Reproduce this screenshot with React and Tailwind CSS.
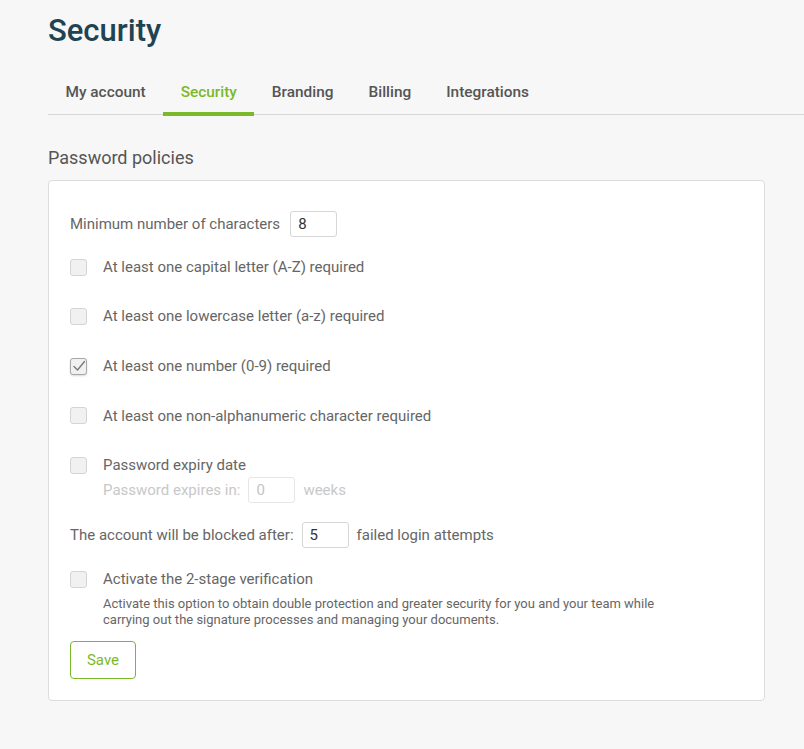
import React, { useState } from 'react';

const tabs = ['My account', 'Security', 'Branding', 'Billing', 'Integrations'];

const Checkbox = ({ checked, onChange }) => (
  <button
    type="button"
    onClick={onChange}
    className={`w-[17px] h-[17px] shrink-0 rounded-[3px] border bg-[#f1f1f1] flex items-center justify-center ${
      checked ? 'border-[#a8a8a8] shadow-[0_1px_2px_rgba(0,0,0,0.15)]' : 'border-[#d4d4d4]'
    }`}
  >
    {checked && (
      <svg width="14" height="14" viewBox="0 0 14 14" fill="none">
        <path d="M2 7.5 L5.5 11 L12.5 2.5" stroke="#7a7a7a" strokeWidth="1.4" strokeLinecap="round" strokeLinejoin="round" />
      </svg>
    )}
  </button>
);

const SmallInput = ({ value, disabled }) => (
  <input
    defaultValue={value}
    disabled={disabled}
    className={`w-[47px] h-[26px] border rounded-[3px] px-[7px] text-[15px] bg-white outline-none ${
      disabled ? 'border-[#e6e6e6] text-[#c4c4c4]' : 'border-[#d6d6d6] text-[#333]'
    }`}
  />
);

const CheckRow = ({ label, checked, onChange }) => (
  <div className="flex items-center gap-[16px] h-[22px]">
    <Checkbox checked={checked} onChange={onChange} />
    <span className="text-[15px] text-[#666]">{label}</span>
  </div>
);

export default function App() {
  const [checks, setChecks] = useState({ upper: false, lower: false, number: true, special: false, expiry: false, twofa: false });
  const toggle = (key) => setChecks((c) => ({ ...c, [key]: !c[key] }));

  return (
    <div className="min-h-[749px] bg-[#f7f7f7] font-['Roboto',sans-serif] pl-[48px] pr-[39px] pt-[10px] pb-[48px]">
      <h1 className="text-[31px] font-medium text-[#1f4350] leading-[42px]">Security</h1>

      <div className="mt-[13px] -mr-[39px] flex border-b border-[#d6d6d6] h-[50px]">
        {tabs.map((t) => (
          <div
            key={t}
            className={`px-[17.5px] pt-[16px] text-[15.4px] font-medium -mb-[2px] border-b-4 ${
              t === 'Security' ? 'text-[#7ab92a] border-[#7ab92a]' : 'text-[#555] border-transparent'
            }`}
          >
            {t}
          </div>
        ))}
      </div>

      <h2 className="mt-[31px] text-[18px] text-[#555] leading-[24px]">Password policies</h2>

      <div className="mt-[10px] bg-white border border-[#dcdcdc] rounded-[4px] px-[21px] pt-[29px] pb-[21px]">
        <div className="flex items-center gap-[10px] h-[28px]">
          <span className="text-[15px] text-[#666]">Minimum number of characters</span>
          <SmallInput value="8" />
        </div>

        <div className="mt-[18px] flex flex-col gap-[27.6px]">
          <CheckRow label="At least one capital letter (A-Z) required" checked={checks.upper} onChange={() => toggle('upper')} />
          <CheckRow label="At least one lowercase letter (a-z) required" checked={checks.lower} onChange={() => toggle('lower')} />
          <CheckRow label="At least one number (0-9) required" checked={checks.number} onChange={() => toggle('number')} />
          <CheckRow label="At least one non-alphanumeric character required" checked={checks.special} onChange={() => toggle('special')} />
          <div>
            <CheckRow label="Password expiry date" checked={checks.expiry} onChange={() => toggle('expiry')} />
            <div className="ml-[33px] mt-[1px] flex items-center gap-[8px] text-[15px] text-[#c8c8c8]">
              <span>Password expires in:</span>
              <SmallInput value="0" disabled />
              <span>weeks</span>
            </div>
          </div>
        </div>

        <div className="mt-[18px] flex items-center gap-[8px] h-[28px] text-[15px] text-[#666]">
          <span>The account will be blocked after:</span>
          <SmallInput value="5" />
          <span>failed login attempts</span>
        </div>

        <div className="mt-[19px]">
          <CheckRow label="Activate the 2-stage verification" checked={checks.twofa} onChange={() => toggle('twofa')} />
          <p className="ml-[33px] mt-[6px] text-[13px] leading-[16px] text-[#666] max-w-[570px]">
            Activate this option to obtain double protection and greater security for you and your team while carrying out the signature processes and managing your documents.
          </p>
        </div>

        <button className="mt-[13px] w-[66px] h-[38px] border border-[#7ab92a] rounded-[4px] text-[15px] text-[#7ab92a] bg-white">
          Save
        </button>
      </div>
    </div>
  );
}
